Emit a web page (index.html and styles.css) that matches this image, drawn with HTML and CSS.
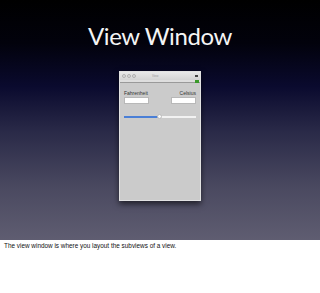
FILE: index.html
```html
<!DOCTYPE html>
<html lang="en">
<head>
  <meta charset="UTF-8" />
  <title>View Window</title>
  <link rel="stylesheet" href="styles.css">
</head>
<body>

  <div class="slide">
    <h1 class="slide-title">View Window</h1>

    <div class="window">
      <div class="titlebar">
        <div class="lights">
          <span></span><span></span><span></span>
        </div>
        <div class="win-name">View</div>
        <div class="pin"></div>
      </div>
      <div class="toolbar">
        <span class="battery"></span>
      </div>

      <div class="content">
        <div class="labels">
          <span>Fahrenheit</span>
          <span>Celsius</span>
        </div>
        <div class="fields">
          <div class="field"></div>
          <div class="field"></div>
        </div>
        <div class="slider">
          <div class="track-fill"></div>
          <div class="knob"></div>
        </div>
      </div>
    </div>
  </div>

  <p class="caption">The view window is where you layout the subviews of a view.</p>

</body>
</html>
```

FILE: styles.css
```css
* { margin: 0; padding: 0; box-sizing: border-box; }

body {
  font-family: 'Liberation Sans', Arial, sans-serif;
  background: #ffffff;
  color: #222;
}

.slide {
  width: 320px;
  height: 240px;
  background: linear-gradient(to bottom, #000000 0%, #02020c 18%, #0a0a2e 36%, #2a2a48 55%, #4a4960 78%, #5f5d71 100%);
  display: flex;
  flex-direction: column;
  align-items: center;
}

.slide-title {
  font-family: 'Lato', sans-serif;
  font-weight: normal;
  font-size: 24px;
  line-height: 30px;
  color: #f4f4f4;
  margin-top: 21px;
  height: 50px;
  letter-spacing: -0.4px;
}

.window {
  width: 82px;
  height: 130px;
  background: #cbcbcb;
  border: 1px solid #e2e2e2;
  box-shadow: 0 3px 6px rgba(0,0,0,0.6);
  display: flex;
  flex-direction: column;
}

.titlebar {
  height: 8px;
  background: linear-gradient(#e8e8e8, #d4d4d4);
  display: flex;
  align-items: center;
  padding: 0 2px;
}

.lights {
  display: flex;
  gap: 1px;
  width: 30px;
}

.lights span {
  width: 4px;
  height: 4px;
  border-radius: 50%;
  border: 1px solid #b0b0b0;
  background: #dcdcdc;
}

.win-name {
  flex: 1;
  font-size: 3px;
  color: #999;
}

.pin {
  width: 3px;
  height: 2px;
  background: #444;
}

.toolbar {
  height: 3px;
  background: #dedede;
  border-bottom: 1px solid #9a9a9a;
  display: flex;
  justify-content: flex-end;
  align-items: center;
  padding-right: 1px;
}

.battery {
  width: 4px;
  height: 3px;
  background: #3a9a2a;
}

.content {
  padding: 7px 4px 0 4px;
}

.labels {
  display: flex;
  justify-content: space-between;
  font-size: 5px;
  color: #333;
  height: 6px;
  line-height: 6px;
}

.fields {
  display: flex;
  justify-content: space-between;
  margin-top: 1px;
}

.field {
  width: 25px;
  height: 7px;
  background: #ffffff;
  border: 1px solid #b8b8b8;
}

.slider {
  position: relative;
  height: 2px;
  margin-top: 12px;
  background: #f2f2f2;
}

.track-fill {
  width: 35px;
  height: 2px;
  background: #4a7fd6;
}

.knob {
  position: absolute;
  left: 33px;
  top: -2px;
  width: 5px;
  height: 5px;
  border-radius: 50%;
  background: #f8f8f8;
  border: 1px solid #bbb;
}

.caption {
  font-size: 6.4px;
  padding: 2px 4px;
  color: #111;
}
```
